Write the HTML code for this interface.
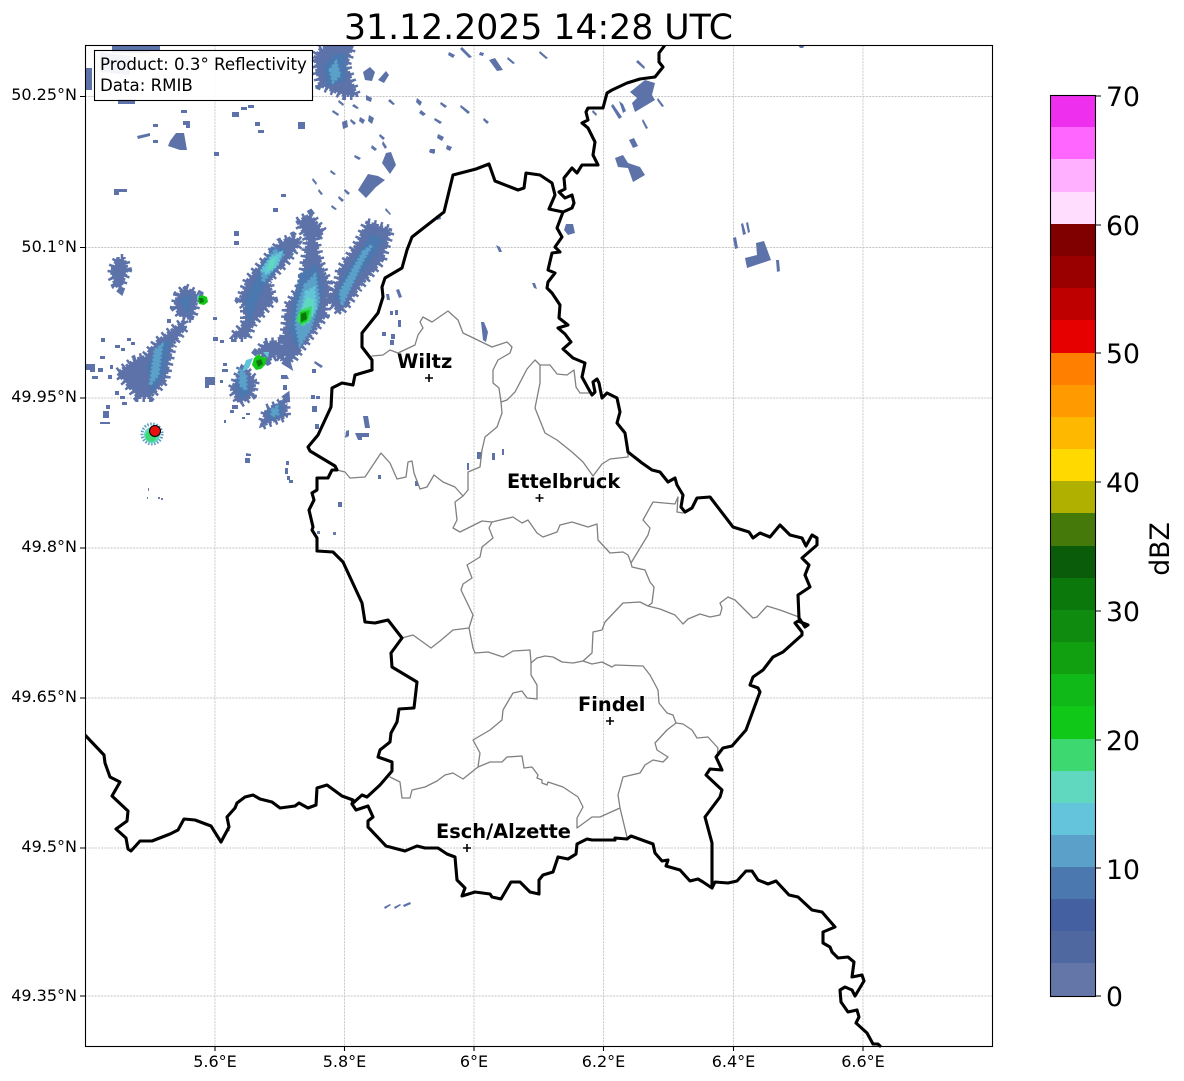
<!DOCTYPE html>
<html>
<head>
<meta charset="utf-8">
<style>
html,body{margin:0;padding:0;background:#fff;width:1184px;height:1081px;overflow:hidden}
svg{display:block;font-family:"DejaVu Sans","Liberation Sans",sans-serif}
.b{fill:none;stroke:#000;stroke-width:3.100;stroke-linejoin:round;stroke-linecap:round}
.g{fill:none;stroke:#808080;stroke-width:1.300;stroke-linejoin:round;stroke-linecap:round}
.grid line{stroke:#b8b8b8;stroke-width:.7;stroke-dasharray:2.2 1}
.c{font-weight:700;font-size:19.400px}
.t{font-size:16px}
.l{font-size:16.640px}
.k{font-size:26.67px}
.f1{stroke:#5c72a8;stroke-width:4;stroke-dasharray:3 1.500}
.f2{stroke:#5c72a8;stroke-width:10;stroke-dasharray:2.500 4;fill:none}
.f3{stroke-width:3;stroke-dasharray:2.500 1.500}
</style>
</head>
<body>
<svg width="1184" height="1081" viewBox="0 0 1184 1081" xmlns="http://www.w3.org/2000/svg">
<rect width="1184" height="1081" fill="#fff"/>

<!-- grid -->
<g class="grid">
<line x1="215" y1="45" x2="215" y2="1046"/><line x1="344.500" y1="45" x2="344.500" y2="1046"/><line x1="474" y1="45" x2="474" y2="1046"/><line x1="603.500" y1="45" x2="603.500" y2="1046"/><line x1="733.500" y1="45" x2="733.500" y2="1046"/><line x1="863" y1="45" x2="863" y2="1046"/>
<line x1="85" y1="96.500" x2="992" y2="96.500"/><line x1="85" y1="247.500" x2="992" y2="247.500"/><line x1="85" y1="398" x2="992" y2="398"/><line x1="85" y1="548" x2="992" y2="548"/><line x1="85" y1="698" x2="992" y2="698"/><line x1="85" y1="848" x2="992" y2="848"/><line x1="85" y1="996" x2="992" y2="996"/>
</g>

<!-- radar -->
<defs>
<g id="blobs">
<path d="M298 222L310 215L323 232L315 238L320 263L328 283L325 315L305 343L292 360L282 353L285 330L287 307L302 283L305 260L308 240Z"/>
<path d="M280 243L293 237L300 242L285 263L268 280L273 300L262 313L253 323L247 337L233 337L245 323L245 307L240 300L248 280L262 263Z"/>
<path d="M367 223L378 226L390 230L382 260L358 288L348 303L340 312L328 300L338 283L340 270L358 243Z"/>
<path d="M242 367L255 380L252 395L240 403L232 390Z"/>
<path d="M265 343L280 342L285 360L277 355L268 360L258 352Z"/>
<path d="M183 322L185 327L172 345L165 380L150 397L138 397L118 373L135 360L145 357L157 342Z"/>
<path d="M185 288L198 295L192 318L182 317L175 307L178 295Z"/>
<path d="M285 400L286 416L267 423L262 425L267 409L278 405Z"/>
<path d="M330 45H352L346 65L352 84L356 95L344 95L320 85L315 58L320 50Z"/>
<path d="M113 268L118 259H124L127 270L123 280L120 288L116 285L112 276Z"/>
</g>
</defs>
<g class="f2"><use href="#blobs"/></g>
<g fill="#5c72a8" class="f1"><use href="#blobs"/></g>
<g fill="#5c72a8">
<path d="M112 45H160V50H150V53H112ZM85 68H92V90H85ZM118 99H135V104H118ZM100 52L130 56V75L100 72Z"/>
<path d="M363 72L370 67L375 72L372 81L365 80ZM378 80L386 71L389 75L384 83ZM358 190L368 174L378 176L385 180L376 187L366 198ZM386 153L391 152L396 165L390 174L382 163Z"/>
<path d="M176 133H184L187 150H180L168 146L170 141Z"/>
<path d="M181 110H187V113H181ZM183 121H190V128H186V125H183ZM153 124H158V127H153ZM137 136L150 133V136L138 139ZM153 140H158V143H153ZM232 112H239V117H232ZM241 107H247V110H241ZM248 105H254V108H248ZM255 122H260V126H255ZM258 130H264V133H258ZM298 122H305V129H298ZM214 152H219V156H214ZM114 189H127V192H119V195H114ZM281 194H286V197H281ZM273 208H278V212H273ZM234 231H239V236H234ZM234 241H239V245H234Z"/>
<path d="M339 100L344 104L343 106L338 102ZM354 104L359 108L357 109L352 106ZM366 95L372 98L371 102L366 100ZM390 99L395 104L393 105L388 101ZM333 110L339 114L338 116L332 112ZM342 122L347 120L348 127L343 129ZM351 119L356 123L354 125L350 121ZM360 117L365 120L363 124L359 121ZM369 115L374 118L372 124L368 121ZM380 134L385 138L383 140L379 136ZM372 145L377 149L375 151L371 148ZM383 141L387 147L385 149L382 144ZM355 155L361 158L359 160L354 157ZM331 170L336 174L334 175L330 172ZM313 178L317 183L316 185L312 180ZM319 189L323 194L321 195L318 191ZM339 196L344 200L342 202L338 198ZM345 189L350 193L348 195L344 191ZM332 205L337 209L335 210L331 207ZM386 208L391 214L390 215L385 210Z"/>
<path d="M462 47L472 57L469 58L460 49ZM489 60L495 58L503 70L497 71ZM508 57L515 63L513 64L507 59ZM540 51L548 58L546 59L539 53ZM417 98L422 102L420 106L416 102ZM421 110L426 114L423 116L419 113ZM441 102L447 106L445 108L440 104ZM435 118L442 122L440 124L434 120ZM438 134L444 137L442 141L437 138ZM447 145L452 147L450 151L446 149ZM430 149L435 151L434 154L429 152ZM484 118L489 122L487 124L483 120ZM461 105L470 112L468 114L460 107ZM449 52L455 55L453 58L448 55ZM480 52L484 53L483 56L479 55Z"/>
<path d="M645 80L655 83L652 95L655 100L635 112L632 103L637 98L630 92Z"/>
<path d="M615 158L623 155L628 163L640 167L645 175L633 182L628 168L618 167Z"/>
<path d="M745 258L757 255L756 243L764 241L771 260L747 268Z"/>
<path d="M566 224L573 224L575 233L568 235L564 230ZM638 60L645 67L644 69L636 62ZM658 98L664 106L662 107L657 100ZM593 110L597 114L596 116L592 112ZM613 104L622 117L619 119L611 106ZM619 101L623 104L626 111L623 113ZM643 119L648 128L646 129L642 121ZM629 140L634 138L638 146L633 148ZM733 238L736 237L738 248L735 249ZM741 224L743 223L746 234L743 235ZM746 223L748 222L750 232L748 233ZM776 260L779 260L780 271L777 272ZM798 45H805L803 48H800Z"/>
<path d="M496 245L500 247L502 252L499 252ZM532 283L535 283L537 289L534 288ZM481 322L484 322L488 332L486 342L483 340ZM436 216L440 214L441 219L437 220ZM430 149H435V153H430ZM477 452H481V459H477ZM492 453H495V460H492ZM502 449H504V455H502ZM467 463H469V470H467ZM378 475H381V479H378ZM415 481H418V486H415ZM338 502H342V507H338ZM386 294L389 294L390 300L387 300ZM396 290L399 289L402 297L399 298ZM390 311H393V315H390ZM395 310H398V315H395ZM398 320H401V327H398ZM382 332H386V336H382ZM391 334H395V339H391ZM390 340H394V345H390ZM355 433H369V437H362V440H358ZM363 416H368L370 428H365ZM346 431L349 430V436L345 438ZM246 453L251 454V456H246ZM245 458H250V463H245ZM286 461H289V465H286ZM285 468H288V474H285ZM287 476H290V480H287ZM289 480H293V483H289Z"/>
<path d="M167 319H171V323H167ZM213 317H217V320H213ZM213 337H218V341H213ZM220 340H224V343H220ZM231 339H235V342H231ZM101 338H105V342H101ZM115 345H120V348H115ZM127 338H131V341H127ZM131 342H135V345H131ZM121 348H125V351H121ZM100 356H105V359H100ZM85 364H95V372H90V370H85ZM98 368H103V372H98ZM110 365H113V369H110ZM108 375H112V379H108ZM92 376H98V379H92ZM115 391H119V395H115ZM120 396H125V399H120ZM122 402H127V405H122ZM106 405H110V409H106ZM103 411H109V418H103ZM100 422H110V424H100ZM223 363H227V366H223ZM222 369H228V372H222ZM205 377H215V385H209V388H205ZM220 380H223V383H220ZM232 405H238V409H232ZM230 410H234V413H230ZM246 413H250V415H246ZM242 417H245V419H242ZM224 420H226V423H224ZM315 361L323 366L321 368L314 363ZM312 369H316V373H312ZM281 375H287L289 379H281ZM283 385H287V390H283ZM311 395H315V399H311ZM316 396H320V399H316ZM312 406H317V412H312ZM315 424H319V429H315Z"/>
<path d="M148 488h1v3h-1ZM147 497h1v2h-1ZM158 497h2v2h-2ZM161 498h2v2h-2ZM333 532h3v3h-3ZM317 531h3v3h-3ZM226 831l3 -3 1 3 -3 1Z" fill="#6b7ba8"/>
<path d="M384 907L390 904L391 905L385 909ZM394 907L400 904L401 905L395 909ZM403 905L410 902L411 904L404 907Z"/>
</g>

<g fill="#4c78b0" stroke="#4c78b0" class="f3">
<path d="M300 275L316 265L322 288L316 320L296 345L290 330L294 305Z"/>
<path d="M272 248L284 250L275 270L262 288L255 305L250 320L245 300L255 283Z"/>
<path d="M372 235L382 240L372 258L352 284L344 302L336 298L345 275Z"/>
<path d="M180 300L190 295L188 312ZM160 345L170 340L163 375L152 390L148 365ZM237 380L248 378L248 393L240 398Z"/>
<path d="M335 55L345 55L345 80L328 85L324 65Z"/>
<path d="M268 412L280 404L282 414L270 419Z"/>
</g>
<g fill="#5aa0c8" stroke="#5aa0c8" class="f3">
<path d="M305 285L315 275L319 300L310 330L300 345L296 325L298 305Z"/>
<path d="M275 250L283 255L272 270L263 282L262 270Z"/>
<path d="M363 252L372 245L362 262L348 292L342 305L340 292Z"/>
<path d="M155 350L162 345L158 375L150 385Z"/>
<path d="M330 70L336 62L340 75L333 82Z"/>
<path d="M240 370L246 375L246 390L240 385ZM272 410L277 407L278 414L272 416Z"/>
</g>
<g fill="#63c4d8" stroke="#63c4d8" class="f3">
<path d="M306 292L314 288L316 308L308 322L300 320Z"/>
<path d="M272 257L281 253L277 265L267 274L262 270Z"/>
</g>
<g fill="#60d8c0"><path d="M307 297L314 300L313 315L304 326L297 320Z"/><path d="M270 260L277 256L273 268L266 272Z"/></g>
<g fill="#3dd870"><path d="M300 310L312 306L311 320L302 326L296 320Z"/></g>
<g fill="#12c818"><path d="M300 312L310 310L307 321L300 324Z"/><path d="M254 358L259 354L262 357L267 358L265 365L261 369L256 370L252 365Z"/><path d="M198 297L202 295L207 297L208 302L204 305L199 304Z"/></g>
<g fill="#0a780a"><path d="M301 314L306 312L307 319L301 322Z"/><path d="M256 361L261 359L263 364L258 367Z"/><path d="M199 298L203 298L204 302L200 303Z"/></g>
<g fill="#63c4d8"><path d="M246 360L253 358L249 368L242 372ZM263 352L269 352L268 358ZM197 296L200 293L197 302Z"/></g>

<!-- bright spike -->
<circle cx="152" cy="434" r="10" fill="none" stroke="#5c9cc4" stroke-width="3" stroke-dasharray="1.500 1.500"/>
<circle cx="152" cy="435" r="8" fill="#5fd8c0"/>
<circle cx="151" cy="436" r="5.500" fill="#3dd870"/>
<circle cx="155" cy="431" r="5.500" fill="#e41010" stroke="#000" stroke-width="1"/>

<!-- canton borders -->
<g class="g">
<path d="M337 470L345 472L350 478L365 477L381 453L390 463L397 479L406 477L408 462L412 461L414 473L420 489L427 487L434 475L443 482L455 487L463 496L468 490L468 472L480 467L482 450L485 437L497 427L502 413L501 402L499 388L493 383L493 370L498 360L510 353L512 347L507 342L492 347L463 333L458 320L448 311L432 322L423 317L420 322L423 328L418 335L415 345L398 353L390 350L383 355L372 356"/>
<path d="M463 496L455 502L457 520L453 528L460 532L482 521L492 522L513 517L522 523L528 520L537 533L543 537L557 532L560 525L572 522L588 527L597 524L598 540L610 553L623 552L628 555L631 563L648 535L650 528L643 520L653 502L675 504L678 497L677 512L683 513"/>
<path d="M631 563L632 567L645 570L650 582L654 587L652 603L648 606"/>
<path d="M583 661L592 653L593 632L602 630L605 622L623 603L640 602L648 606L660 609L675 615L683 624L688 619L700 614L710 617L720 615L722 608L720 603L728 597L735 600L753 618L757 617L767 606L780 610L799 617"/>
<path d="M531 663L537 658L545 656L553 657L562 662L573 663L583 661L592 664L602 662L612 667L615 665L643 666L650 675L658 690L659 703L667 713L673 715L676 723L683 724L692 730L697 738L708 737L718 748L717 757"/>
<path d="M676 723L667 730L655 743L657 750L668 757L663 762L653 760L645 765L640 773L623 777L618 795L620 808L627 837"/>
<path d="M620 808L600 817L592 817L577 828L577 818L583 807L578 797L563 787L548 782L547 785L542 783L542 780L537 778L538 775L532 767L524 768L522 756L507 757L502 762L490 762L478 767L463 779L453 773L445 775L437 781L425 787L412 790L410 798L402 798L400 782L390 777"/>
<path d="M478 767L480 753L473 740L490 730L502 720L503 710L513 693L522 691L527 698L537 699L537 685L531 675L531 663L530 650L513 651L503 657L488 652L475 653L473 648L469 628L453 630L440 641L431 648L413 635L402 638"/>
<path d="M469 628L473 615L461 590L463 584L472 578L467 565L480 557L482 547L493 538L489 528L492 522"/>
<path d="M501 402L507 400L515 392L527 369L535 360L540 365L550 365L557 374L567 375L574 370L576 387L580 393L590 393"/>
<path d="M540 365L540 383L535 408L545 433L557 440L572 452L583 462L593 476L602 464L610 459L628 457L628 452"/>
</g>

<!-- national borders -->
<g class="b">
<path d="M85 735L104 755L105 763L110 777L120 782L112 796L128 811L127 821L116 829L126 838L128 849L131 851L140 841L152 841L170 834L178 830L184 819L195 820L211 826L221 842L229 827L227 817L235 808L237 803L245 797L253 795L260 799L272 802L280 808L295 806L299 803L308 808L316 805L317 788L327 785L342 796L353 800L352 804L356 810L368 806L373 817L368 821L368 827L386 846L405 851L417 846L425 848L438 848L447 854L455 857L457 880L465 888L462 896L475 892L490 894L492 897L501 899L511 882L520 882L530 892L539 894L539 880L543 875L553 872L558 857L568 859L576 854L577 844L587 839L592 840L615 840L615 838L627 839L631 836L653 844L655 853L662 861L668 860L666 866L680 870L690 881L698 879L703 882L712 888L712 843L705 817L720 797L722 790L706 775L710 769L722 770L716 757L723 748L732 746L746 730L757 700L760 692L758 688L750 685L753 677L763 670L773 657L783 652L802 635L802 632L795 623L798 621L808 625L805 627L799 618L798 595L810 587L805 575L809 565L802 558L817 545L817 538L812 535L806 546L802 538L790 535L780 525L770 537L760 533L753 538L749 532L733 527L710 497L697 498L692 508L685 512L681 507L683 495L677 485L675 478L668 482L660 472L652 470L642 463L628 452L625 433L617 423L620 412L617 398L607 393L602 398L599 383L597 379L593 382L595 392L592 395L588 388L582 377L585 363L573 358L563 349L571 342L565 334L558 328L568 325L559 318L560 305L552 293L547 288L548 282L555 273L548 270L552 253L560 252L555 247L562 237L557 228L563 212L572 208L574 203L572 195L565 198L559 192L565 189L564 178L572 168L577 173L582 165L598 165L593 155L595 142L588 128L582 123L588 120L586 112L588 108L603 108L607 93L612 90L627 83L640 79L655 77L663 67L659 62L659 53L665 45"/>
<path d="M563 212L549 209L555 195L552 183L540 175L526 173L524 188L518 190L495 181L489 164L476 169L453 175L444 212L412 237L407 250L402 268L385 278L382 287L383 297L378 313L362 333L362 347L372 360L372 370L355 375L353 385L342 383L332 388L331 407L318 435L308 447L310 451L335 466L337 470L332 470L328 478L317 478L317 490L312 493L314 500L309 510L313 527L312 530L317 538L317 551L333 552L343 562L362 603L365 622L375 623L388 620L402 638L391 653L392 667L417 682L414 708L399 709L397 722L391 733L390 742L380 750L378 757L392 762L392 771L380 785L367 797L362 795L352 804"/>
<path d="M712 888L715 882L728 883L737 881L746 871L752 871L758 880L768 884L776 881L789 895L798 897L812 910L822 912L835 927L823 932L823 943L830 947L832 952L838 958L848 957L854 962L852 977L862 975L864 981L855 996L852 990L845 987L840 990L841 1002L848 1012L857 1010L859 1017L856 1023L867 1033L873 1044L878 1044L880 1046"/>
</g>

<!-- city markers -->
<g stroke="#000" stroke-width="1.600" fill="none">
<path d="M425 378H433M429 374V382"/>
<path d="M535.500 498H543.500M539.500 494V502"/>
<path d="M606 721H614M610 717V725"/>
<path d="M463 848H471M467 844V852"/>
</g>
<text class="c" x="397" y="368">Wiltz</text>
<text class="c" x="507" y="488">Ettelbruck</text>
<text class="c" x="578" y="711">Findel</text>
<text class="c" x="436" y="838">Esch/Alzette</text>

<!-- mask overflow outside the axes -->
<rect x="0" y="0" width="85" height="1081" fill="#fff"/>
<rect x="0" y="0" width="1000" height="45" fill="#fff"/>

<text x="538.5" y="39" font-size="34.67" text-anchor="middle">31.12.2025 14:28 UTC</text>

<!-- axes frame -->
<rect x="85.500" y="45.500" width="907" height="1001" fill="none" stroke="#000" stroke-width="1.100"/>

<!-- legend box -->
<rect x="94.500" y="50.500" width="218" height="50" fill="#fff" fill-opacity=".92" stroke="#000" stroke-width="1.100"/>
<text class="l" x="100" y="70">Product: 0.3° Reflectivity</text>
<text class="l" x="100" y="91">Data: RMIB</text>

<!-- ticks -->
<g stroke="#000" stroke-width="1.100">
<path d="M215 1046V1051M344.500 1046V1051M474 1046V1051M603.500 1046V1051M733.500 1046V1051M863 1046V1051"/>
<path d="M80 96.500H85M80 247.500H85M80 398H85M80 548H85M80 698H85M80 848H85M80 996H85"/>
</g>
<g class="t" text-anchor="middle">
<text x="215" y="1067">5.6°E</text><text x="344.500" y="1067">5.8°E</text><text x="474" y="1067">6°E</text><text x="603.500" y="1067">6.2°E</text><text x="733.500" y="1067">6.4°E</text><text x="863" y="1067">6.6°E</text>
</g>
<g class="t" text-anchor="end">
<text x="77" y="100">50.25°N</text><text x="77" y="252">50.1°N</text><text x="77" y="402">49.95°N</text><text x="77" y="552">49.8°N</text><text x="77" y="702">49.65°N</text><text x="77" y="852">49.5°N</text><text x="77" y="1001">49.35°N</text>
</g>

<!-- colorbar -->
<g shape-rendering="crispEdges">
<rect x="1051" y="96" width="44" height="32" fill="#ee30ee"/>
<rect x="1051" y="127" width="44" height="33" fill="#ff66ff"/>
<rect x="1051" y="159" width="44" height="34" fill="#ffb0ff"/>
<rect x="1051" y="192" width="44" height="33" fill="#ffddff"/>
<rect x="1051" y="224" width="44" height="33" fill="#800000"/>
<rect x="1051" y="256" width="44" height="33" fill="#9b0000"/>
<rect x="1051" y="288" width="44" height="33" fill="#bf0000"/>
<rect x="1051" y="320" width="44" height="34" fill="#e60000"/>
<rect x="1051" y="353" width="44" height="33" fill="#ff8000"/>
<rect x="1051" y="385" width="44" height="33" fill="#ff9b00"/>
<rect x="1051" y="417" width="44" height="33" fill="#ffb800"/>
<rect x="1051" y="449" width="44" height="33" fill="#ffd900"/>
<rect x="1051" y="481" width="44" height="33" fill="#b0b000"/>
<rect x="1051" y="513" width="44" height="34" fill="#457a0a"/>
<rect x="1051" y="546" width="44" height="33" fill="#0a5c0a"/>
<rect x="1051" y="578" width="44" height="33" fill="#0a780a"/>
<rect x="1051" y="610" width="44" height="33" fill="#0f8c0f"/>
<rect x="1051" y="642" width="44" height="33" fill="#10a010"/>
<rect x="1051" y="674" width="44" height="33" fill="#10b818"/>
<rect x="1051" y="706" width="44" height="34" fill="#10c818"/>
<rect x="1051" y="739" width="44" height="33" fill="#3dd870"/>
<rect x="1051" y="771" width="44" height="33" fill="#60d8c0"/>
<rect x="1051" y="803" width="44" height="33" fill="#64c4dc"/>
<rect x="1051" y="835" width="44" height="33" fill="#5aa0c8"/>
<rect x="1051" y="867" width="44" height="33" fill="#4c78b0"/>
<rect x="1051" y="899" width="44" height="33" fill="#4460a0"/>
<rect x="1051" y="931" width="44" height="33" fill="#5068a0"/>
<rect x="1051" y="963" width="44" height="33" fill="#6476a8"/>
</g>
<rect x="1050.500" y="95.500" width="45" height="901" fill="none" stroke="#000" stroke-width="1.100"/>
<path d="M1095 96H1101M1095 225H1101M1095 353H1101M1095 482H1101M1095 611H1101M1095 740H1101M1095 868H1101M1095 996H1101" stroke="#000" stroke-width="1.100"/>
<g class="k">
<text x="1106" y="106">70</text><text x="1106" y="235">60</text><text x="1106" y="363">50</text><text x="1106" y="492">40</text><text x="1106" y="621">30</text><text x="1106" y="750">20</text><text x="1106" y="879">10</text><text x="1106" y="1006">0</text>
</g>
<text class="k" transform="translate(1169,549) rotate(-90)" text-anchor="middle">dBZ</text>
</svg>
</body>
</html>
